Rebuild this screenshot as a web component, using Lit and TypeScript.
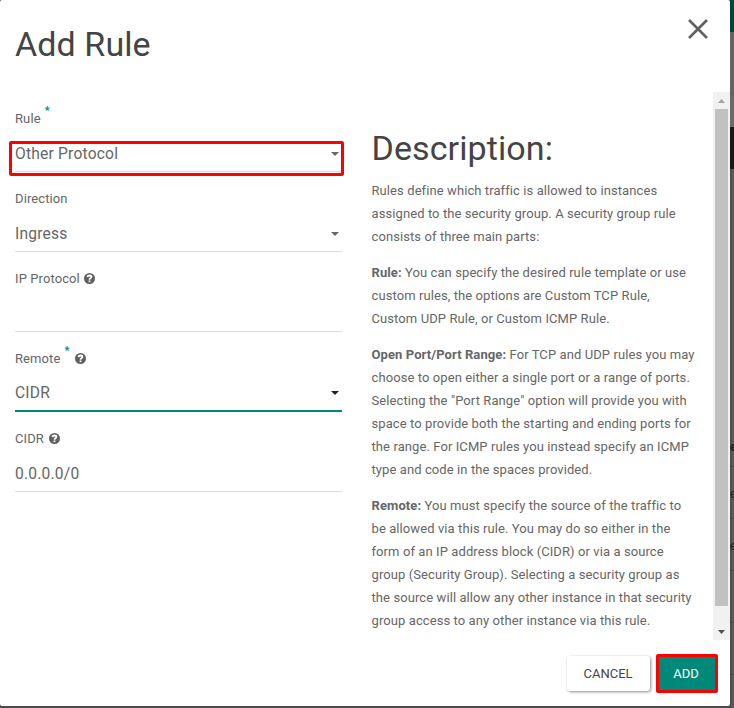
import { LitElement, html, css, svg } from "lit";
import { customElement, property } from "lit/decorators.js";

@customElement("help-icon")
class HelpIcon extends LitElement {
  static styles = css`
    :host { display: block; width: 11px; height: 11px; }
    svg { display: block; }
    .disc { fill: #606060; }
    .hook { fill: none; stroke: #fff; stroke-width: 1.8; }
    .dot { fill: #fff; }
  `;
  render() {
    return html`<svg width="11" height="11" viewBox="0 0 11 11">
      ${svg`<circle class="disc" cx="5.5" cy="5.5" r="5.5"/>
      <path class="hook" d="M3.4 4.2C3.6 2.9 4.4 2.5 5.5 2.5C6.6 2.5 7.4 3.1 7.4 4C7.4 5.1 5.5 5.2 5.5 6.7"/>
      <rect class="dot" x="4.6" y="7.5" width="1.8" height="1.6"/>`}
    </svg>`;
  }
}

@customElement("form-field")
class FormField extends LitElement {
  @property() label = "";
  @property() value = "";
  @property({ type: Boolean }) required = false;
  @property({ type: Boolean }) help = false;
  @property({ type: Boolean }) select = false;
  @property({ type: Boolean, reflect: true }) active = false;
  @property({ type: Boolean, reflect: true }) marked = false;
  static styles = css`
    :host { display: block; height: 80px; position: relative; }
    .label { display: flex; align-items: center; height: 24px; font-size: 13px; letter-spacing: 0.1px; color: #666; }
    .star { align-self: flex-start; width: 5px; margin: -3px 0 0 4px; color: #00897b; font-size: 10.5px; font-weight: 900; line-height: 16px; letter-spacing: 0; }
    help-icon { margin: 1px 0 0 4.6px; }
    .star + help-icon { margin-left: 5.5px; }
    .control { display: flex; align-items: center; justify-content: space-between; box-sizing: border-box; height: 36px; margin-top: 6px; padding-right: 3px; border-bottom: 1px solid #ddd; font-size: 15.6px; letter-spacing: 0.2px; color: #666; }
    :host([active]) .control { border-bottom: 2px solid #00897b; }
    .caret { display: block; fill: #666; margin-top: 0; }
    :host([active]) .caret { fill: #212121; margin-top: 0; }
    .ring { position: absolute; left: -6px; top: 35px; width: 335px; height: 35px; box-sizing: border-box; border: 3px solid #fd0000; border-radius: 2px; }
  `;
  render() {
    return html`
      <div class="label"><span>${this.label}</span>
        ${this.required ? html`<span class="star">*</span>` : ""}${this.help ? html`<help-icon></help-icon>` : ""}
      </div>
      <div class="control"><span>${this.value}</span>
        ${this.select ? html`<svg class="caret" width="8" height="4" viewBox="0 0 8 4"><path d="M0 0H8L4 4Z"/></svg>` : ""}
      </div>
      ${this.marked ? html`<div class="ring"></div>` : ""}`;
  }
}

@customElement("app-root")
class AppRoot extends LitElement {
  static styles = css`
    :host { display: block; position: relative; width: 734px; height: 708px; overflow: hidden; background: #4b4b4d; font-family: Roboto, "Liberation Sans", sans-serif; color: #666; }
    .page { position: absolute; left: 730px; top: 0; width: 4px; height: 708px; overflow: hidden; display: flex; flex-direction: column; background: linear-gradient(90deg, #4a4a4a, #606060); font-size: 13px; line-height: 52px; }
    .nav { height: 32px; flex: none; background: #00443d; }
    .crumb { height: 64px; flex: none; background: #646464; }
    .tools { height: 31px; flex: none; background: #6b6b6b; }
    .bar { height: 42px; flex: none; background: #191919; }
    .gap { height: 251px; flex: none; }
    .cell { height: 51px; flex: none; border-bottom: 1px solid #484848; color: #222; }
    .cell.head { height: 46px; line-height: 54px; font-weight: 700; }
    .cell + .cell { line-height: 54px; }
    .modal { position: relative; display: grid; grid-template-rows: 92px 548px 66px; width: 730px; height: 706px; background: #fff; border-radius: 2px; overflow: hidden; }
    .header { display: flex; justify-content: space-between; align-items: flex-start; padding: 20px 22px 0 15px; }
    h3 { margin: 0; font-size: 34px; line-height: 48px; font-weight: 400; color: #444; letter-spacing: 0.1px; }
    .close { display: block; fill: none; stroke: #606060; stroke-width: 2.6; margin-top: -1px; }
    .body { display: flex; }
    .form { width: 327px; margin-right: 29.5px; padding: 14px 0 0 15px; }
    .desc { width: 341px; padding: 32px 0 0; }
    .desc p { margin: 0 0 13px; font-size: 13px; line-height: 23px; letter-spacing: 0.09px; white-space: nowrap; }
    .desc h3 { margin-bottom: 7px; }
    b { font-weight: 700; }
    .scroll { display: flex; flex-direction: column; align-items: center; justify-content: space-between; width: 17px; margin-left: auto; background: #f1f1f1; }
    .scroll svg { display: block; flex: none; }
    .thumb { width: 13px; height: 497px; background: #c1c1c1; margin-bottom: 17px; }
    .up { fill: #a3a3a3; }
    .down { fill: #505050; }
    .footer { display: flex; justify-content: flex-end; padding: 14px 12px 0 0; gap: 6px; }
    .btn { box-sizing: border-box; display: flex; align-items: center; justify-content: center; font-size: 13px; padding-right: 1px; }
    .cancel { width: 83px; height: 35px; margin-top: 2px; color: #444; border-radius: 3px; background: #fff; box-shadow: 1px 1px 3px rgba(0,0,0,.45); }
    .add { width: 62px; height: 39px; color: #fff; background: #00897b; border: 3px solid #fd0000; border-radius: 2px; padding-right: 2px; }
  `;
  render() {
    return html`
      <div class="page">
        <div class="nav"></div><div class="crumb"></div><div class="tools"></div><div class="bar"></div><div class="gap"></div>
        <div class="cell head">e</div><div class="cell">e</div><div class="cell">e</div><div class="cell"></div><div class="cell"></div>
      </div>
      <div class="modal">
        <div class="header"><h3>Add Rule</h3>
          <svg class="close" width="20" height="20" viewBox="0 0 20 20"><path d="M1 1L19 19M19 1L1 19"/></svg>
        </div>
        <div class="body">
          <div class="form">
            <form-field label="Rule" value="Other Protocol" required select marked></form-field>
            <form-field label="Direction" value="Ingress" select></form-field>
            <form-field label="IP Protocol" help></form-field>
            <form-field label="Remote" value="CIDR" required help select active></form-field>
            <form-field label="CIDR" value="0.0.0.0/0" help></form-field>
          </div>
          <div class="desc">
            <h3>Description:</h3>
            <p>Rules define which traffic is allowed to instances<br>assigned to the security group. A security group rule<br>consists of three main parts:</p>
            <p><b>Rule:</b> You can specify the desired rule template or use<br>custom rules, the options are Custom TCP Rule,<br>Custom UDP Rule, or Custom ICMP Rule.</p>
            <p><b>Open Port/Port Range:</b> For TCP and UDP rules you may<br>choose to open either a single port or a range of ports.<br>Selecting the "Port Range" option will provide you with<br>space to provide both the starting and ending ports for<br>the range. For ICMP rules you instead specify an ICMP<br>type and code in the spaces provided.</p>
            <p><b>Remote:</b> You must specify the source of the traffic to<br>be allowed via this rule. You may do so either in the<br>form of an IP address block (CIDR) or via a source<br>group (Security Group). Selecting a security group as<br>the source will allow any other instance in that security<br>group access to any other instance via this rule.</p>
          </div>
          <div class="scroll">
            <svg class="up" width="17" height="17" viewBox="0 0 17 17"><path d="M5 11L8.5 7L12 11Z"/></svg>
            <div class="thumb"></div>
            <svg class="down" width="17" height="17" viewBox="0 0 17 17"><path d="M5 7L8.5 11L12 7Z"/></svg>
          </div>
        </div>
        <div class="footer"><div class="btn cancel">CANCEL</div><div class="btn add">ADD</div></div>
      </div>`;
  }
}
